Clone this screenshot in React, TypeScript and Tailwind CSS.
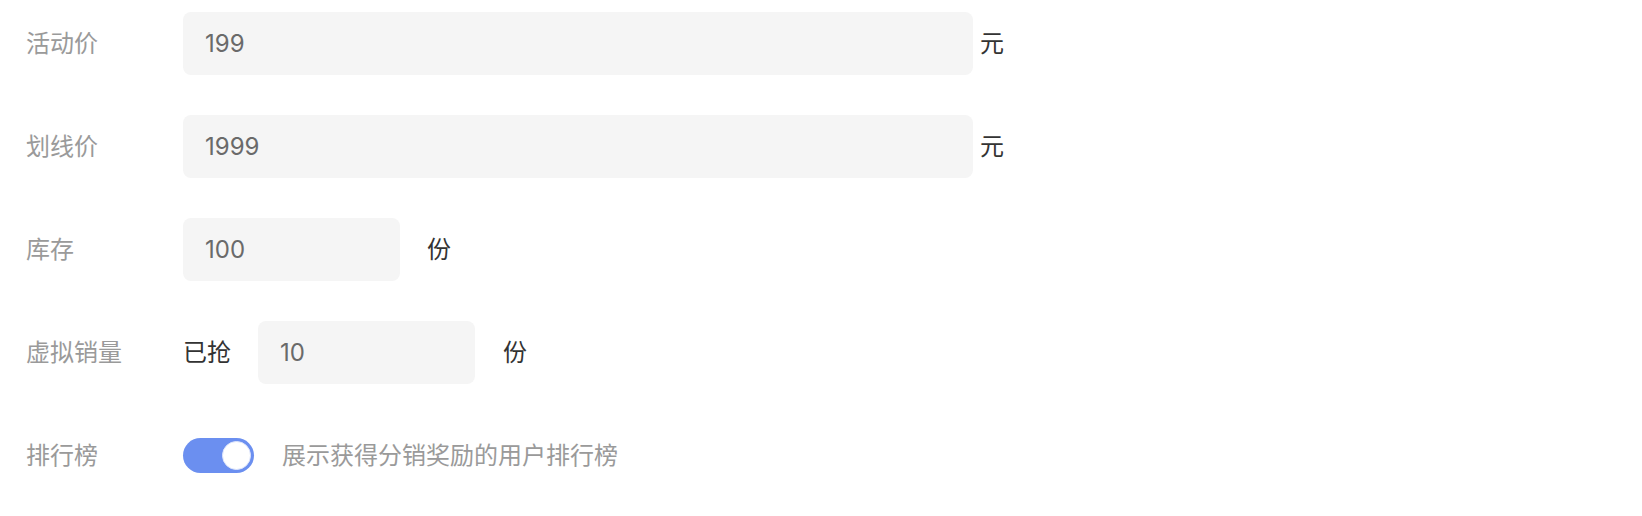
import { useState } from 'react'

const FONT = { fontFamily: 'Inter, "Noto Sans CJK SC", "Noto Sans", sans-serif' }

function Label({ children }: { children: React.ReactNode }) {
  return <div className="w-[157px] shrink-0 text-[24px] leading-none text-[#9a9a9a]">{children}</div>
}

function Field({ value, width }: { value: string; width: string }) {
  return (
    <div className={`${width} flex h-[63px] shrink-0 items-center rounded-lg bg-[#f5f5f5] pl-[22px] text-[24px] leading-none text-[#6a6a6a]`}>
      {value}
    </div>
  )
}

export default function App() {
  const [ranking, setRanking] = useState(true)

  return (
    <div className="min-h-screen bg-white" style={FONT}>
      <div className="flex flex-col gap-[40px] pt-[12px] pl-[26px]">
        {/* 活动价 */}
        <div className="flex h-[63px] items-center">
          <Label>活动价</Label>
          <Field value="199" width="w-[790px]" />
          <span className="ml-[7px] text-[24px] leading-none text-[#333]">元</span>
        </div>

        {/* 划线价 */}
        <div className="flex h-[63px] items-center">
          <Label>划线价</Label>
          <Field value="1999" width="w-[790px]" />
          <span className="ml-[7px] text-[24px] leading-none text-[#333]">元</span>
        </div>

        {/* 库存 */}
        <div className="flex h-[63px] items-center">
          <Label>库存</Label>
          <Field value="100" width="w-[217px]" />
          <span className="ml-[27px] text-[24px] leading-none text-[#333]">份</span>
        </div>

        {/* 虚拟销量 */}
        <div className="flex h-[63px] items-center">
          <Label>虚拟销量</Label>
          <span className="mr-[27px] text-[24px] leading-none text-[#333]">已抢</span>
          <Field value="10" width="w-[217px]" />
          <span className="ml-[28px] text-[24px] leading-none text-[#333]">份</span>
        </div>

        {/* 排行榜 */}
        <div className="flex h-[63px] items-center">
          <Label>排行榜</Label>
          <button
            onClick={() => setRanking(r => !r)}
            className={`flex h-[35px] w-[71px] shrink-0 items-center rounded-full px-[3px] ${ranking ? 'justify-end bg-[#6b8ff0]' : 'justify-start bg-[#dcdcdc]'}`}
          >
            <span className="h-[29px] w-[29px] rounded-full border border-[#dfe6fb] bg-white" />
          </button>
          <span className="ml-[28px] text-[24px] leading-none text-[#9a9a9a]">展示获得分销奖励的用户排行榜</span>
        </div>
      </div>
    </div>
  )
}
